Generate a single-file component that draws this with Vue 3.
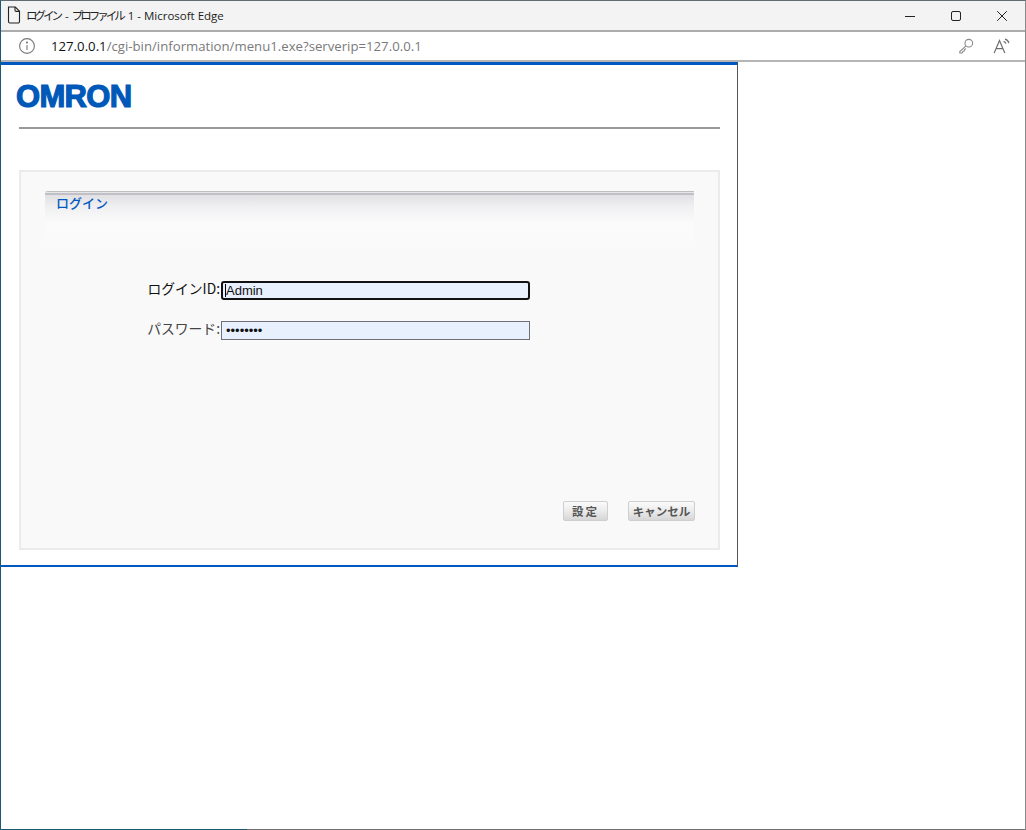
<script setup>
const rows = [
  { label: 'ログインID:', type: 'text', value: 'Admin', focus: true },
  { label: 'パスワード:', type: 'password', value: 'password', focus: false },
]
</script>

<template>
  <div class="window">
    <header class="titlebar">
      <svg class="doc" width="14" height="18" viewBox="0 0 14 18" fill="none" stroke="#222" stroke-width="1.1">
        <path d="M1.5 1h6.8L12.5 5.2V15.5a1.5 1.5 0 0 1-1.5 1.5H3a1.5 1.5 0 0 1-1.5-1.5z" />
        <path d="M8 1v3.2a1.2 1.2 0 0 0 1.2 1.2h3.3" />
      </svg>
      <span class="title"><span class="kana">ログイン</span> - <span class="kana">プロファイル</span> 1 - Microsoft Edge</span>
      <div class="controls">
        <svg width="12" height="12" viewBox="0 0 12 12" stroke="#222" fill="none"><path d="M1 6.5h10" /></svg>
        <svg width="12" height="12" viewBox="0 0 12 12" stroke="#222" fill="none"><rect x="1.5" y="1.5" width="9" height="9" rx="1.5" /></svg>
        <svg width="12" height="12" viewBox="0 0 12 12" stroke="#222" fill="none"><path d="M1.2 1.2l9.6 9.6M10.8 1.2l-9.6 9.6" /></svg>
      </div>
    </header>

    <div class="addressbar">
      <svg class="info" width="18" height="18" viewBox="0 0 18 18" fill="none" stroke="#777" stroke-width="1.1">
        <circle cx="9" cy="9" r="7.4" />
        <path d="M9 8v5" />
        <circle cx="9" cy="5.6" r=".5" fill="#777" />
      </svg>
      <span class="url"><span class="host">127.0.0.1</span>/cgi-bin/information/menu1.exe?serverip=127.0.0.1</span>
      <div class="tools">
        <svg width="16" height="16" viewBox="0 0 16 16" fill="none" stroke="#8a8a8a" stroke-width="1.1">
          <circle cx="10.8" cy="5.2" r="3.8" />
          <path d="M8 7.9L1.8 13.6V15h2.4l.6-1.6 1.4-.4.4-1.6 1.4-.6" />
        </svg>
        <svg width="18" height="16" viewBox="0 0 18 16" fill="none" stroke="#6f6f6f" stroke-width="1.2">
          <path d="M1.2 15L6.5 2.5 11.8 15M3.2 10.6h6.6" />
          <path d="M10.6 3.4c1.2.3 2 1.2 2.3 2.3M12 1.2c1.9.5 3.4 2 3.9 3.9" />
        </svg>
      </div>
    </div>

    <main class="viewport">
      <section class="page">
        <div class="brand">
          <span class="logo">OMRON</span>
        </div>
        <div class="panel">
          <div class="heading"><h1>ログイン</h1></div>
          <form class="form" @submit.prevent>
            <template v-for="row in rows" :key="row.label">
              <label class="label" :class="{ dark: row.focus }">{{ row.label }}</label>
              <input class="field" :class="{ focused: row.focus }" :type="row.type" :value="row.value" readonly />
            </template>
          </form>
          <div class="actions">
            <button type="button" class="btn narrow">設定</button>
            <button type="button" class="btn">キャンセル</button>
          </div>
        </div>
      </section>
    </main>
    <div class="bottom-edge"></div>
  </div>
</template>

<style>
html, body { margin: 0; background: #fff; }
</style>

<style scoped>
.window {
  width: 1026px;
  height: 830px;
  box-sizing: border-box;
  border-top: 1px solid #5f6d72;
  border-left: 1px solid #1a5a70;
  border-right: 1px solid #8a8a8a;
  display: flex;
  flex-direction: column;
  background: #fff;
  overflow: hidden;
  font-family: "Noto Sans CJK JP", sans-serif;
}
.titlebar {
  height: 29px;
  flex: none;
  background: #f3f3f3;
  border-bottom: 2px solid #acacac;
  display: flex;
  align-items: center;
  padding-left: 6px;
  color: #222;
}
.doc { flex: none; margin-top: -1px; }
.title {
  margin: -2px 0 0 5px;
  font-family: "Open Sans", "Noto Sans CJK JP", sans-serif;
  font-size: 11.5px;
  white-space: nowrap;
}
.kana { letter-spacing: -3px; margin-right: 2px; }
.controls {
  margin-left: auto;
  display: flex;
  gap: 34px;
  padding-right: 17px;
}
.addressbar {
  height: 28px;
  flex: none;
  border-bottom: 2px solid #b5b5b5;
  display: flex;
  align-items: center;
  padding-left: 17px;
}
.info { flex: none; }
.url {
  margin-left: 15px;
  font-family: "Open Sans", sans-serif;
  font-size: 13.2px;
  color: #7a7a7a;
  white-space: nowrap;
}
.host { color: #111; }
.tools {
  margin-left: auto;
  display: flex;
  gap: 19px;
  align-items: center;
  padding-right: 14px;
}
.viewport { flex: 1; min-height: 0; }
.page {
  width: 737px;
  box-sizing: border-box;
  height: 505px;
  border-top: 3px solid #0058c0;
  border-bottom: 2px solid #0058c0;
  border-right: 1px solid #555;
  padding: 0 17px 0 18px;
}
.brand {
  height: 48px;
  padding-top: 14px;
  margin: 0 0 41px;
  border-bottom: 2px solid #999;
}
.logo {
  display: block;
  margin-left: -3px;
  font-family: "Liberation Sans", sans-serif;
  font-weight: 700;
  font-size: 31px;
  line-height: 36px;
  letter-spacing: -0.7px;
  color: #0058b8;
  -webkit-text-stroke: 1.2px #0058b8;
}
.panel {
  height: 380px;
  box-sizing: border-box;
  border: 2px solid #ebebeb;
  background: #f9f9f9;
  padding: 19px 24px 27px;
  display: flex;
  flex-direction: column;
}
.heading {
  height: 60px;
  flex: none;
  box-sizing: border-box;
  background:
    linear-gradient(#bdbdc2, #bdbdc2) 2px 0 / 100% 1px no-repeat,
    linear-gradient(#e6e6e8, #e6e6e8) 0 1px / 100% 1px no-repeat,
    linear-gradient(#c0c0c6, #c0c0c6) 0 2px / 100% 2px no-repeat,
    linear-gradient(#e1e1e5 4px, #f0f0f2 16px, #fbfbfb 32px, #f9f9f9 60px);
  padding: 3px 0 0 11px;
}
.heading h1 {
  margin: 0;
  font-size: 13px;
  font-weight: 500;
  line-height: 18px;
  color: #0058c0;
}
.form {
  margin-top: 30px;
  display: grid;
  grid-template-columns: 176px 309px;
  grid-auto-rows: 20px;
  row-gap: 20px;
  align-items: center;
}
.label {
  justify-self: end;
  margin: -6px 1px 0 0;
  font-family: "Noto Sans CJK JP", sans-serif;
  font-size: 13.8px;
  line-height: 20px;
  color: #444;
  white-space: nowrap;
}
.label.dark { color: #111; }
.field {
  align-self: start;
  box-sizing: border-box;
  width: 309px;
  height: 19px;
  margin: 0;
  padding: 0 4px 1px;
  border: 1px solid #6f6f78;
  background: #e8f0fe;
  font-family: "Liberation Sans", sans-serif;
  font-size: 13px;
  color: #111;
  outline: none;
}
.field.focused {
  border: 2px solid #111;
  border-radius: 3px;
  padding: 0 3px 1px;
  background: linear-gradient(#000, #000) 2px center / 1px 13px no-repeat, #e8f0fe;
}
.actions {
  margin: auto -1px 0 0;
  display: flex;
  justify-content: flex-end;
  gap: 20px;
}
.btn {
  height: 20px;
  width: 67px;
  padding: 0;
  border: 1px solid #cfcfcf;
  border-radius: 2px;
  background: linear-gradient(#fbfbfb, #e9e9e9 55%, #d6d6d6);
  font-family: "Noto Sans CJK JP", sans-serif;
  font-size: 11.5px;
  font-weight: 700;
  color: #555;
  line-height: 18px;
}
.btn.narrow { width: 45px; letter-spacing: 2px; }
.bottom-edge {
  height: 1px;
  flex: none;
  background: linear-gradient(90deg, #1a5a70 246px, #707070 246px);
}
</style>
